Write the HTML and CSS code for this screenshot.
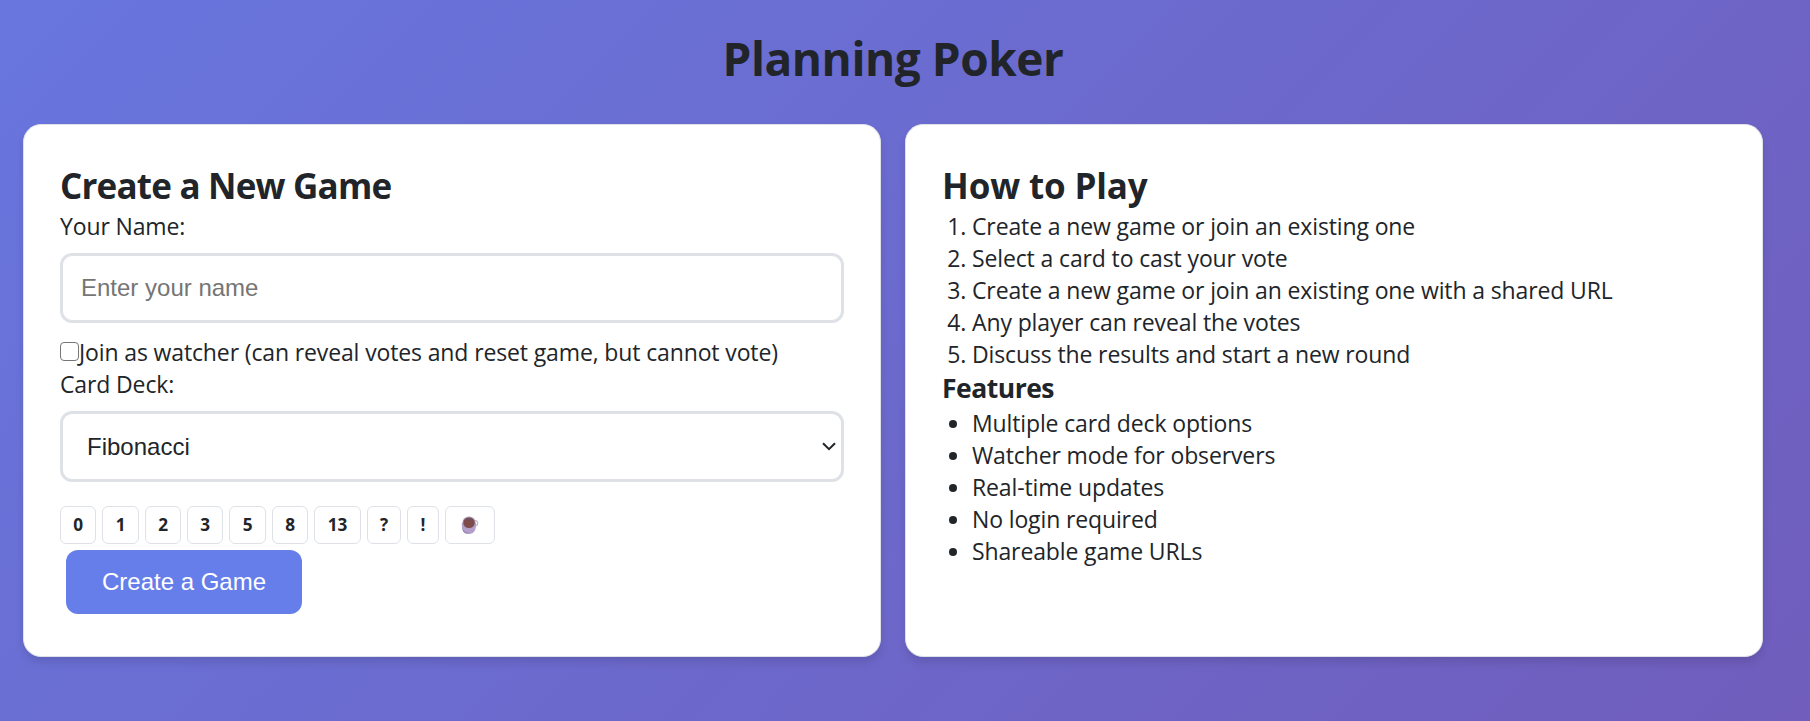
FILE: index.html
```html
<!DOCTYPE html>
<html lang="en">
<head>
<meta charset="utf-8">
<title>Planning Poker</title>
<link rel="stylesheet" href="styles.css">
</head>
<body>
<main class="container">
  <h1 class="title">Planning Poker</h1>
  <div class="panels">
    <section class="card">
      <h2 class="heading heading-form">Create a New Game</h2>
      <label class="label" for="name">Your Name:</label>
      <input class="input" id="name" type="text" placeholder="Enter your name">
      <label class="watcher"><input class="check" type="checkbox"><span>Join as watcher (can reveal votes and reset game, but cannot vote)</span></label>
      <label class="label" for="deck">Card Deck:</label>
      <div class="select-wrap">
        <select class="select" id="deck"><option>Fibonacci</option></select>
        <svg class="chevron" width="14" height="9" viewBox="0 0 14 9"><path d="M1 1.200 7 7.200 13 1.200" fill="none" stroke="#212529" stroke-width="2"/></svg>
      </div>
      <div class="deck">
        <span class="chip w36">0</span><span class="chip w37">1</span><span class="chip w36">2</span><span class="chip w36">3</span><span class="chip w37">5</span><span class="chip w36">8</span><span class="chip w47">13</span><span class="chip w34">?</span><span class="chip w32">!</span><span class="chip w50"><svg width="18" height="19" viewBox="0 0 18 19"><circle cx="14" cy="7.200" r="2.600" fill="none" stroke="#c4b5d0" stroke-width="1.200"/><path d="M.8 7C.4 14 3 18 8 18s7.400-4 7-11z" fill="#b49fcc"/><path d="M1.200 11c1 4.500 4 6.500 8 5.500-4 2.500-8 .500-8-5.500z" fill="#967fac"/><ellipse cx="8" cy="6.500" rx="6.500" ry="6" fill="#a995b5"/><ellipse cx="8" cy="6.800" rx="5.700" ry="5.200" fill="#7e4b4c"/><path d="M3 4.500C5 1 11 1 13 4.500 10 3 6 3 3 4.500z" fill="#6d5360"/></svg></span>
      </div>
      <button class="create">Create a Game</button>
    </section>
    <section class="card">
      <h2 class="heading">How to Play</h2>
      <ol class="list">
        <li>Create a new game or join an existing one</li>
        <li>Select a card to cast your vote</li>
        <li>Create a new game or join an existing one with a shared URL</li>
        <li>Any player can reveal the votes</li>
        <li>Discuss the results and start a new round</li>
      </ol>
      <h3 class="subheading">Features</h3>
      <ul class="list">
        <li>Multiple card deck options</li>
        <li>Watcher mode for observers</li>
        <li>Real-time updates</li>
        <li>No login required</li>
        <li>Shareable game URLs</li>
      </ul>
    </section>
  </div>
</main>
</body>
</html>
```
FILE: styles.css
```css
* { box-sizing: border-box; margin: 0; padding: 0; }
body {
  min-height: 721px;
  background: linear-gradient(135deg, #6876de 0%, #705dbc 100%) no-repeat;
  color: #212529;
  font: 23px/32px "Open Sans", "Noto Sans", sans-serif;
  letter-spacing: -0.13px;
}
.container { width: 1786px; padding: 23px 23px 0; }
.title { font-size: 46px; line-height: 70px; letter-spacing: -0.45px; text-align: center; margin-bottom: 31px; }
.panels { display: grid; grid-template-columns: 1fr 1fr; gap: 24px; }
.card {
  height: 533px;
  padding: 37px 36px;
  background: #fff;
  border: 1px solid #dee2e6;
  border-radius: 18px;
  box-shadow: 0 6px 9px rgba(0, 0, 0, .1);
}
.heading { font-size: 35px; line-height: 48px; letter-spacing: -0.15px; }
.heading-form { letter-spacing: -0.8px; }
.subheading { font-size: 26.5px; line-height: 37px; letter-spacing: -0.5px; }
.label { display: block; }
.input, .select {
  display: block;
  width: 100%;
  border: 3px solid #dee2e6;
  border-radius: 12px;
  background: #fff;
  color: #212529;
  font: 24px "Liberation Sans", Arial, sans-serif;
}
.input { height: 70px; margin: 11px 0 13px; padding: 0 18px; }
.input::placeholder { color: #757575; }
.watcher { display: flex; align-items: center; height: 32px; }
.check { appearance: none; flex: none; width: 19px; height: 19px; margin-bottom: 2px; border: 1.5px solid #767676; border-radius: 4px; }
.select-wrap { position: relative; margin: 11px 0 24px; }
.select { height: 71px; padding: 0 24px; appearance: none; }
.chevron { position: absolute; right: 8px; top: 31px; }
.deck { display: flex; gap: 6px; height: 38px; margin-bottom: 6px; }
.chip {
  display: flex;
  align-items: center;
  justify-content: center;
  border: 1px solid #dee2e6;
  border-radius: 6px;
  font-size: 17.2px;
  font-weight: 700;
}
.w32 { width: 32px; } .w34 { width: 34px; } .w36 { width: 36px; } .w37 { width: 37px; } .w47 { width: 47px; } .w50 { width: 50px; }
.create {
  display: block;
  width: 236px;
  height: 64px;
  margin-left: 6px;
  border: 0;
  border-radius: 12px;
  background: #667eea;
  color: #fff;
  font: 24px "Liberation Sans", Arial, sans-serif;
}
.list { padding-left: 30px; }
```
